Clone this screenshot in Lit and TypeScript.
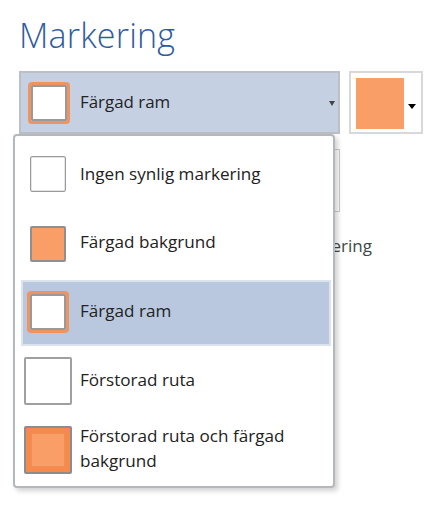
import { LitElement, html, css } from "lit";
import { customElement } from "lit/decorators.js";

const items = [
  { kind: "none", label: "Ingen synlig markering" },
  { kind: "fill", label: "Färgad bakgrund" },
  { kind: "frame", label: "Färgad ram", selected: true },
  { kind: "big", label: "Förstorad ruta" },
  { kind: "bigfill", label: "Förstorad ruta och färgad bakgrund" },
];

@customElement("app-root")
export class AppRoot extends LitElement {
  static styles = css`
    :host {
      display: block;
      position: relative;
      width: 444px;
      height: 520px;
      background: #fff;
      overflow: hidden;
      font-family: "Open Sans", "Noto Sans", sans-serif;
      color: #222;
    }
    .page {
      display: flex;
      flex-direction: column;
      padding: 14px 0 0 19px;
    }
    h1 {
      margin: 0;
      height: 57px;
      font-size: 34px;
      line-height: 42px;
      font-weight: 300;
      letter-spacing: 0.2px;
      color: #2f5c9e;
    }
    .controls {
      display: flex;
      gap: 9px;
    }
    .combo {
      box-sizing: border-box;
      width: 321px;
      height: 63px;
      display: flex;
      align-items: center;
      padding: 0 3px 0 7px;
      border: 2px solid #bcbfc6;
      background: #c5d0e2;
    }
    .combo .label {
      margin: -2px 0 0 10px;
      flex: 1;
      font-size: 16.9px;
    }
    .caret {
      width: 0;
      height: 0;
      border-left: 3.5px solid transparent;
      border-right: 3.5px solid transparent;
      border-top: 5px solid #444;
      margin-top: 2px;
    }
    .color {
      box-sizing: border-box;
      width: 74px;
      height: 63px;
      display: flex;
      align-items: center;
      padding: 5px 5px 3px 5px;
      border: 2px solid #d8d8d8;
    }
    .color .swatch {
      width: 48px;
      height: 51px;
      background: #fa9e68;
    }
    .color .caret {
      margin: 6px 0 0 4px;
      border-left-width: 4px;
      border-right-width: 4px;
      border-top-color: #000;
    }
    .field {
      box-sizing: border-box;
      width: 321px;
      height: 63px;
      margin-top: 15px;
      border: 1px solid #ccc;
    }
    .behind {
      width: 353px;
      margin-top: 22px;
      text-align: right;
      font-size: 17px;
      line-height: 24px;
      white-space: nowrap;
      color: #3b4a44;
    }
    .menu {
      position: absolute;
      left: 13px;
      top: 134px;
      box-sizing: border-box;
      width: 322px;
      height: 354px;
      display: flex;
      flex-direction: column;
      padding: 3px 2px 0 9px;
      background: #fff;
      border: 2px solid #b4b7bb;
      border-radius: 4px;
      box-shadow: 3px 3px 5px rgba(0, 0, 0, 0.18);
    }
    .item {
      box-sizing: border-box;
      display: flex;
      align-items: center;
      gap: 8px;
      font-size: 17.1px;
      line-height: 25px;
      color: #222;
    }
    .item .text {
      margin-top: -2px;
    }
    .item.selected {
      background: #b9c8df;
      border: 2px solid #dbe3ef;
      margin-left: -3px;
      padding-left: 1px;
    }
    .slot {
      width: 48px;
      flex: none;
      display: flex;
      justify-content: center;
      align-items: center;
    }
    .selected .slot {
      margin-top: -2px;
    }
    .item.h2 .text {
      margin-top: -4px;
    }
    .item.h3 .text {
      margin-top: -5px;
    }
    .item.h4 .text {
      margin-top: -4px;
    }
    .icon {
      box-sizing: border-box;
      border-radius: 2px;
      background: #fff;
    }
    .none, .fill {
      width: 36px;
      height: 36px;
      border: 1px solid #9a9a9a;
      box-shadow: inset 0 0 0 0.5px #ccc;
    }
    .fill {
      background: #fa9e68;
      border: 2px solid #8f8f8f;
      box-shadow: none;
    }
    .frame {
      width: 42px;
      height: 42px;
      border: 3px solid #ef9461;
      border-radius: 4px;
      box-shadow: inset 0 0 0 2px #9a9a9a;
    }
    .big {
      width: 48px;
      height: 48px;
      border: 2px solid #a0a0a0;
    }
    .bigfill {
      width: 48px;
      height: 48px;
      display: flex;
      align-items: center;
      justify-content: center;
      background: #f68a4c;
      border: 2px solid #8c8c8c;
    }
    .bigfill i {
      display: block;
      width: 34px;
      height: 34px;
      background: #fa9e68;
      border: 1px solid #ee8f57;
      box-sizing: border-box;
    }
    .h1 { height: 70px; }
    .h2 { height: 69px; margin-bottom: 2px; }
    .h3 { height: 66px; }
    .h4 { height: 70px; }
    .h5 { height: 68px; }
    .item.h5 .text { width: 240px; margin-top: -5px; }
  `;

  render() {
    return html`
      <div class="page">
        <h1>Markering</h1>
        <div class="controls">
          <div class="combo">
            <div class="icon frame"></div>
            <span class="label">Färgad ram</span>
            <span class="caret"></span>
          </div>
          <div class="color">
            <div class="swatch"></div>
            <span class="caret"></span>
          </div>
        </div>
        <div class="field"></div>
        <div class="behind">ering</div>
      </div>
      <div class="menu">
        ${items.map(
          (it, i) => html`
            <div class="item h${i + 1} ${it.selected ? "selected" : ""}">
              <div class="slot">
                <div class="icon ${it.kind}">${it.kind === "bigfill" ? html`<i></i>` : ""}</div>
              </div>
              <span class="text">${it.label}</span>
            </div>
          `
        )}
      </div>
    `;
  }
}
